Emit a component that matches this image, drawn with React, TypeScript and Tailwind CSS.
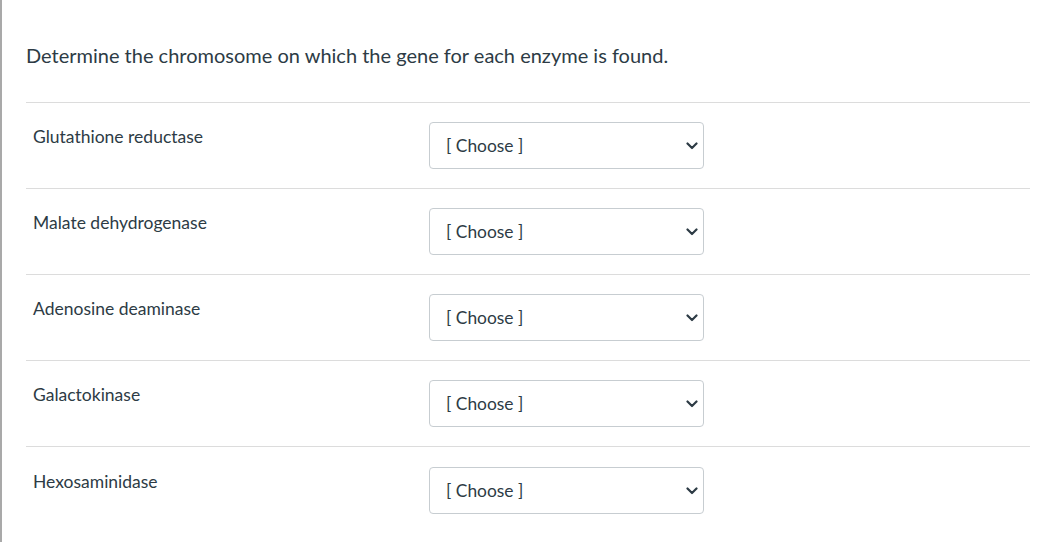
const enzymes = [
  "Glutathione reductase",
  "Malate dehydrogenase",
  "Adenosine deaminase",
  "Galactokinase",
  "Hexosaminidase",
];

const Chevron = () => (
  <svg width="12" height="8" viewBox="0 0 12 8" fill="none">
    <path d="M1.5 1.5l4.5 4.5 4.5-4.5" stroke="#2d3b45" strokeWidth="2.2" strokeLinecap="round" strokeLinejoin="round" />
  </svg>
);

const ChooseBox = () => (
  <div className="flex h-[47px] w-[275px] items-center justify-between rounded-[4px] border border-[#c7cdd1] bg-white pl-[16px] pr-[5px]">
    <span className="text-[17.4px] leading-[22px] text-[#2d3b45]">[ Choose ]</span>
    <Chevron />
  </div>
);

const App: React.FC = () => {
  return (
    <div
      className="min-h-[542px] w-[1046px] border-l-2 border-[#a9a9a9] bg-white pl-[24px] pr-[16px] text-[#2d3b45]"
      style={{ fontFamily: "Lato, 'Noto Sans', sans-serif" }}
    >
      <div className="pt-[41px] pb-[33px]">
        <p className="text-[20px] leading-[28px]">
          Determine the chromosome on which the gene for each enzyme is found.
        </p>
      </div>

      {enzymes.map((name, i) => (
        <div
          key={name}
          className={
            i === enzymes.length - 1
              ? "flex border-t border-[#dcdcdc] pt-[20px] pb-[19px]"
              : "flex border-t border-[#dcdcdc] pt-[19px] pb-[19px]"
          }
        >
          <div className="w-[403px] pl-[7px] pt-[4px] text-[17.5px] leading-[22px]">{name}</div>
          <ChooseBox />
        </div>
      ))}
    </div>
  );
};

export default App;
